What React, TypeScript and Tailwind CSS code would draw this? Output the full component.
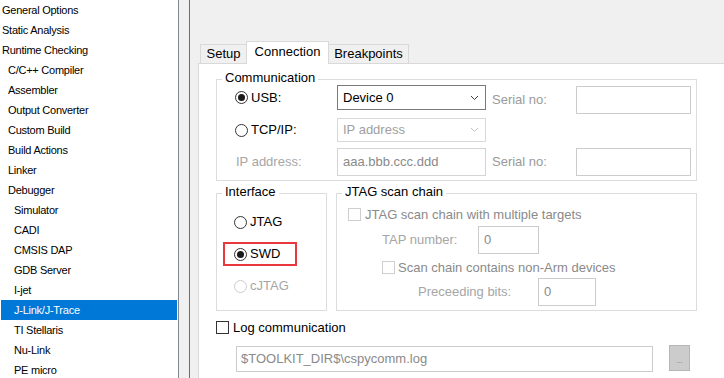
const navItems: { label: string; level: number; selected?: boolean }[] = [
  { label: "General Options", level: 0 },
  { label: "Static Analysis", level: 0 },
  { label: "Runtime Checking", level: 0 },
  { label: "C/C++ Compiler", level: 1 },
  { label: "Assembler", level: 1 },
  { label: "Output Converter", level: 1 },
  { label: "Custom Build", level: 1 },
  { label: "Build Actions", level: 1 },
  { label: "Linker", level: 1 },
  { label: "Debugger", level: 1 },
  { label: "Simulator", level: 2 },
  { label: "CADI", level: 2 },
  { label: "CMSIS DAP", level: 2 },
  { label: "GDB Server", level: 2 },
  { label: "I-jet", level: 2 },
  { label: "J-Link/J-Trace", level: 2, selected: true },
  { label: "TI Stellaris", level: 2 },
  { label: "Nu-Link", level: 2 },
  { label: "PE micro", level: 2 },
];

const indent = ["pl-[1px]", "pl-[7px]", "pl-[13px]"];

function Radio({ checked, disabled }: { checked?: boolean; disabled?: boolean }) {
  return (
    <span
      className={`w-[13px] h-[13px] shrink-0 rounded-full border bg-white flex items-center justify-center ${
        disabled ? "border-[#cccccc]" : "border-[#333333]"
      }`}
    >
      {checked && <span className="w-[7px] h-[7px] rounded-full bg-[#1a1a1a]" />}
    </span>
  );
}

function Checkbox({ disabled }: { disabled?: boolean }) {
  return (
    <span
      className={`w-[13px] h-[13px] shrink-0 border bg-white ${
        disabled ? "border-[#cfcfcf]" : "border-[#333333]"
      }`}
    />
  );
}

function Chevron({ disabled }: { disabled?: boolean }) {
  return (
    <svg width="9" height="6" viewBox="0 0 9 6" className="shrink-0">
      <polyline
        points="1,1 4.5,4.5 8,1"
        fill="none"
        stroke={disabled ? "#c2c2c2" : "#3c3c3c"}
        strokeWidth="1"
      />
    </svg>
  );
}

function Group({
  title,
  className,
  children,
}: {
  title: string;
  className: string;
  children: React.ReactNode;
}) {
  return (
    <div className={`relative border border-[#dcdcdc] ${className}`}>
      {/* caption sits over the top border */}
      <span className="absolute -top-[10px] left-[5px] bg-white px-[3px] leading-[16px] text-black">
        {title}
      </span>
      {children}
    </div>
  );
}

export default function App() {
  return (
    <div className="w-[724px] h-[378px] overflow-hidden flex bg-[#f0f0f0] font-['Liberation_Sans',Arial,sans-serif]">
      {/* Category list */}
      <aside className="w-[179px] shrink-0 bg-white border-r border-[#828790] px-[1px] text-[11px] tracking-[-0.25px]">
        {navItems.map((item) => (
          <div
            key={item.label}
            className={`h-[20px] flex items-center ${indent[item.level]} ${
              item.selected ? "bg-[#0078d7] text-white" : "text-black"
            }`}
          >
            {item.label}
          </div>
        ))}
      </aside>

      <div className="w-[10px] shrink-0" />
      <div className="w-px shrink-0 bg-[#6e6e6e]" />

      {/* Tab control */}
      <div className="flex-1 min-w-0 flex flex-col pt-[41px] pl-[8px] text-[13px] leading-[16px]">
        <div className="flex items-end h-[22px] pl-[2px] shrink-0">
          <div className="w-[47px] h-[19px] border border-b-0 border-[#d9d9d9] bg-[#f0f0f0] flex items-center justify-center text-black">
            Setup
          </div>
          <div className="relative z-10 w-[83px] h-[23px] -ml-px -mb-px border border-b-0 border-[#d9d9d9] bg-white flex items-center justify-center pb-[3px] text-black">
            Connection
          </div>
          <div className="w-[81px] h-[19px] -ml-px border border-b-0 border-[#d9d9d9] bg-[#f0f0f0] flex items-center justify-center text-black">
            Breakpoints
          </div>
        </div>

        <div className="h-[340px] shrink-0 bg-white border border-r-0 border-[#d9d9d9] pl-[17px] pt-[15px]">
          <Group title="Communication" className="w-[481px] h-[102px] pt-[5px] pl-[18px]">
            <div className="flex items-start h-[26px]">
              <div className="w-[102px] h-[25px] flex items-center gap-[3px] text-black">
                <Radio checked />
                USB:
              </div>
              <div className="w-[149px] h-[25px] border border-[#7a7a7a] flex items-center justify-between pl-[5px] pr-[6px] text-black">
                Device 0
                <Chevron />
              </div>
              <div className="w-[90px] h-[28px] mt-[1px] pl-[6px] flex items-center text-[#9a9a9a]">
                Serial no:
              </div>
              <div className="w-[115px] h-[28px] mt-[1px] border border-[#cccccc]" />
            </div>

            <div className="flex items-center h-[26px] mt-[6px]">
              <div className="w-[102px] flex items-center gap-[3px] text-black">
                <Radio />
                TCP/IP:
              </div>
              <div className="w-[149px] h-[24px] border border-[#d9d9d9] flex items-center justify-between pl-[5px] pr-[6px] text-[#a0a0a0]">
                IP address
                <Chevron disabled />
              </div>
            </div>

            <div className="flex items-center h-[26px] mt-[6px]">
              <div className="w-[102px] pl-[1px] text-[#a6a6a6]">IP address:</div>
              <div className="w-[149px] h-[28px] border border-[#d4d4d4] flex items-center pl-[5px] text-[#8a8a8a]">
                aaa.bbb.ccc.ddd
              </div>
              <div className="w-[90px] pl-[6px] text-[#9a9a9a]">Serial no:</div>
              <div className="w-[115px] h-[28px] border border-[#cccccc]" />
            </div>
          </Group>

          <div className="flex gap-[9px] mt-[12px]">
            <Group title="Interface" className="w-[111px] h-[118px] pt-[16px] pl-[6px]">
              <div className="flex flex-col gap-[8px]">
                <div className="w-[74px] h-[24px] border-2 border-transparent flex items-center gap-[3px] pl-[9px] text-black">
                  <Radio />
                  JTAG
                </div>
                <div className="w-[74px] h-[24px] border-2 border-[#e8383d] flex items-center gap-[3px] pl-[9px] text-black">
                  <Radio checked />
                  SWD
                </div>
                <div className="w-[74px] h-[24px] border-2 border-transparent flex items-center gap-[3px] pl-[9px] text-[#a6a6a6]">
                  <Radio disabled />
                  cJTAG
                </div>
              </div>
            </Group>

            <Group title="JTAG scan chain" className="w-[361px] h-[118px] pt-[14px] pl-[11px]">
              <div className="flex items-center gap-[4px] h-[13px] text-[#8a8a8a]">
                <Checkbox disabled />
                JTAG scan chain with multiple targets
              </div>
              <div className="flex items-center mt-[5px] ml-[34px]">
                <div className="w-[96px] text-[#a6a6a6]">TAP number:</div>
                <div className="w-[61px] h-[28px] border border-[#cccccc] flex items-center pl-[5px] text-[#8a8a8a]">
                  0
                </div>
              </div>
              <div className="flex items-center gap-[3px] h-[13px] mt-[7px] ml-[34px] text-[#8a8a8a]">
                <Checkbox disabled />
                Scan chain contains non-Arm devices
              </div>
              <div className="flex items-center mt-[4px] ml-[70px]">
                <div className="w-[120px] text-[#a6a6a6]">Preceeding bits:</div>
                <div className="w-[58px] h-[28px] border border-[#cccccc] flex items-center pl-[5px] text-[#8a8a8a]">
                  0
                </div>
              </div>
            </Group>
          </div>

          <div className="flex items-center gap-[4px] h-[15px] mt-[9px] text-black">
            <Checkbox />
            Log communication
          </div>

          <div className="flex items-start mt-[10px]">
            <div className="ml-[20px] mt-[1px] w-[417px] h-[26px] border border-[#cccccc] flex items-center pl-[4px] text-[#8a8a8a]">
              {"$TOOLKIT_DIR$\\cspycomm.log"}
            </div>
            <div className="ml-[16px] w-[21px] h-[26px] border border-[#b5b5b5] bg-[#cccccc] flex items-end justify-center pb-[5px] text-[8px] leading-[8px] text-[#7a7a9a]">
              ...
            </div>
          </div>
        </div>
      </div>
    </div>
  );
}
